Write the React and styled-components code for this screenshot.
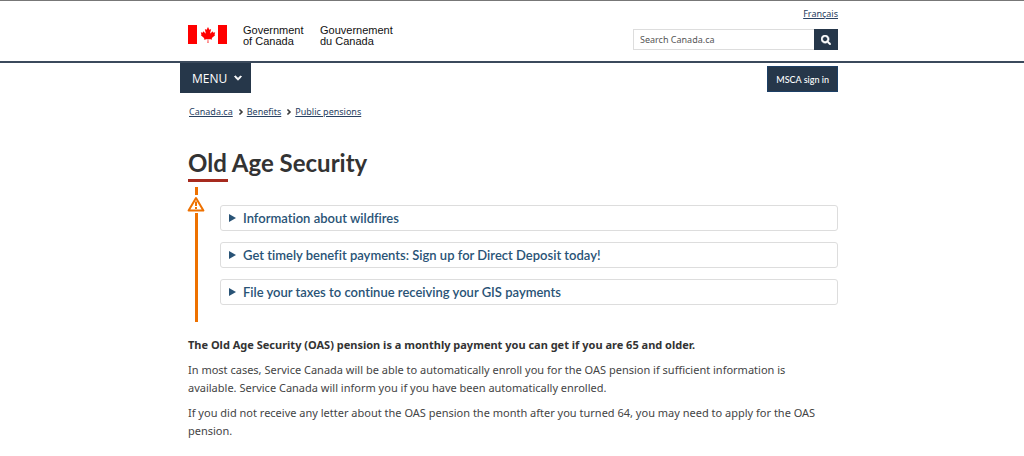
import React from 'react'
import styled, { createGlobalStyle } from 'styled-components'
import { FaCanadianMapleLeaf, FaChevronDown, FaChevronRight, FaSearch } from 'react-icons/fa'

const GlobalStyle = createGlobalStyle`
  * {
    box-sizing: border-box;
  }

  body {
    margin: 0;
    background: #fff;
    color: #444;
    font-family: 'Noto Sans', sans-serif;
    font-size: 11px;
    line-height: 18px;
  }
`

const Container = styled.div`
  max-width: 652px;
  margin: 0 auto;
  padding-left: 2px;
`

const Header = styled.header`
  border-top: 1px solid #777;
  border-bottom: 2px solid #3b4a5c;
`

const HeaderRow = styled(Container)`
  display: flex;
  justify-content: space-between;
  align-items: flex-start;
  padding-top: 6px;
  padding-bottom: 11px;
`

const Brand = styled.a`
  display: flex;
  align-items: flex-start;
  padding-top: 18px;
  color: #111;
  font-family: 'Liberation Sans', sans-serif;
  font-size: 11px;
  line-height: 11px;
  text-decoration: none;
`

const Flag = styled.span`
  display: flex;
  justify-content: center;
  align-items: center;
  width: 39px;
  height: 19px;
  margin-right: 16px;
  border: solid #f00;
  border-width: 0 9px;
  color: #f00;
  font-size: 16px;
`

const BrandName = styled.span`
  width: 77px;
`

const HeaderTools = styled.div`
  display: flex;
  flex-direction: column;
  align-items: flex-end;
  gap: 8px;
`

const LangLink = styled.a`
  color: #284162;
  font-size: 9px;
  line-height: 14px;
`

const SearchForm = styled.form`
  display: flex;
`

const SearchInput = styled.input`
  width: 181px;
  height: 21px;
  padding: 0 6px;
  border: 1px solid #ddd;
  border-right: 0;
  border-radius: 0;
  color: #444;
  font-family: inherit;
  font-size: 9px;

  &::placeholder {
    color: #555;
    opacity: 1;
  }
`

const SearchButton = styled.button`
  display: flex;
  justify-content: center;
  align-items: center;
  width: 24px;
  height: 21px;
  padding: 0;
  border: 0;
  background: #26374a;
  color: #fff;
  font-size: 10px;

  svg {
    stroke: currentColor;
    stroke-width: 30;
  }
`

const NavRow = styled(Container)`
  display: flex;
  justify-content: space-between;
  align-items: flex-start;
`

const MenuButton = styled.button`
  display: flex;
  align-items: center;
  gap: 7px;
  height: 30px;
  margin-left: -8px;
  padding: 0 9px 0 12px;
  border: 0;
  background: #26374a;
  color: #fff;
  font-family: 'Open Sans', sans-serif;
  font-size: 12px;

  svg {
    font-size: 8px;
    stroke: currentColor;
    stroke-width: 60;
  }
`

const SignInButton = styled.button`
  height: 26px;
  margin-top: 3px;
  padding: 0 8px;
  border: 1px solid #1c3f66;
  background: #26374a;
  color: #fff;
  font-family: Lato, sans-serif;
  font-size: 9px;
  font-weight: 500;
`

const Breadcrumb = styled.ol`
  display: flex;
  margin: 12px 0 0;
  padding: 0 1px;
  list-style: none;
  font-size: 9px;
  line-height: 14px;
`

const Crumb = styled.li`
  display: flex;
  align-items: center;

  a {
    color: #284162;
  }

  svg {
    margin: 0 3px 0 5px;
    color: #333;
    font-size: 6px;
    stroke: currentColor;
    stroke-width: 60;
  }
`

const Title = styled.h1`
  margin: 28px 0 0;
  color: #333;
  font-family: Lato, sans-serif;
  font-size: 24px;
  font-weight: 700;
  line-height: 32px;

  &::after {
    content: '';
    display: block;
    width: 40px;
    height: 3px;
    background: #a62a1e;
  }
`

const Alert = styled.section`
  display: flex;
  gap: 16px;
  margin-top: 5px;
`

const Rail = styled.div`
  display: flex;
  flex-direction: column;
  align-items: center;
  width: 16px;

  &::before,
  &::after {
    content: '';
    width: 3px;
    height: 8px;
    background: #ee7100;
  }

  &::after {
    flex: 1;
  }

  svg {
    display: block;
    margin: 1px 0;
  }
`

const AlertBody = styled.div`
  display: flex;
  flex: 1;
  flex-direction: column;
  gap: 11px;
  padding: 18px 0 17px;
`

const Details = styled.details`
  border: 1px solid #ddd;
  border-radius: 3px;
`

const Summary = styled.summary`
  display: flex;
  align-items: center;
  gap: 7px;
  padding: 3px 8px;
  color: #295376;
  font-family: Lato, sans-serif;
  font-size: 13px;
  font-weight: 600;
  font-variant-ligatures: none;
  cursor: pointer;

  &::before {
    content: '';
    border: solid transparent;
    border-width: 4px 0 4px 7px;
    border-left-color: #295376;
  }
`

const Content = styled.div`
  margin-top: 14px;
  padding-right: 12px;

  p {
    margin: 0 0 7px;
  }

  strong {
    color: #333;
  }
`

const WarningIcon = () => (
  <svg width="18" height="16" viewBox="0 0 18 16" fill="none" stroke="#ee7100">
    <path d="M9 2 L16.4 14.6 H1.6 Z" strokeWidth="2" strokeLinejoin="round" />
    <path d="M9 5.5 V10" strokeWidth="2" />
    <path d="M9 11 V13" strokeWidth="2" />
  </svg>
)

const crumbs = ['Canada.ca', 'Benefits', 'Public pensions']

const notices = [
  'Information about wildfires',
  'Get timely benefit payments: Sign up for Direct Deposit today!',
  'File your taxes to continue receiving your GIS payments',
]

const App = () => {
  return (
    <>
      <GlobalStyle />
      <Header>
        <HeaderRow>
          <Brand href="#">
            <Flag>
              <FaCanadianMapleLeaf />
            </Flag>
            <BrandName>
              Government
              <br />
              of Canada
            </BrandName>
            <BrandName lang="fr">
              Gouvernement
              <br />
              du Canada
            </BrandName>
          </Brand>
          <HeaderTools>
            <LangLink href="#" lang="fr">
              Français
            </LangLink>
            <SearchForm role="search" onSubmit={e => e.preventDefault()}>
              <SearchInput type="search" aria-label="Search Canada.ca" placeholder="Search Canada.ca" />
              <SearchButton type="submit" aria-label="Search">
                <FaSearch />
              </SearchButton>
            </SearchForm>
          </HeaderTools>
        </HeaderRow>
      </Header>

      <NavRow as="nav">
        <MenuButton type="button">
          MENU
          <FaChevronDown />
        </MenuButton>
        <SignInButton type="button">MSCA sign in</SignInButton>
      </NavRow>

      <Container as="main">
        <Breadcrumb>
          {crumbs.map((crumb, index) => (
            <Crumb key={crumb}>
              {index > 0 && <FaChevronRight />}
              <a href="#">{crumb}</a>
            </Crumb>
          ))}
        </Breadcrumb>

        <Title>Old Age Security</Title>

        <Alert>
          <Rail>
            <WarningIcon />
          </Rail>
          <AlertBody>
            {notices.map(notice => (
              <Details key={notice}>
                <Summary>{notice}</Summary>
              </Details>
            ))}
          </AlertBody>
        </Alert>

        <Content>
          <p>
            <strong>
              The Old Age Security (OAS) pension is a monthly payment you can get if you are 65 and older.
            </strong>
          </p>
          <p>
            In most cases, Service Canada will be able to automatically enroll you for the OAS pension if
            sufficient information is available. Service Canada will inform you if you have been
            automatically enrolled.
          </p>
          <p>
            If you did not receive any letter about the OAS pension the month after you turned 64, you may
            need to apply for the OAS pension.
          </p>
        </Content>
      </Container>
    </>
  )
}

export default App
